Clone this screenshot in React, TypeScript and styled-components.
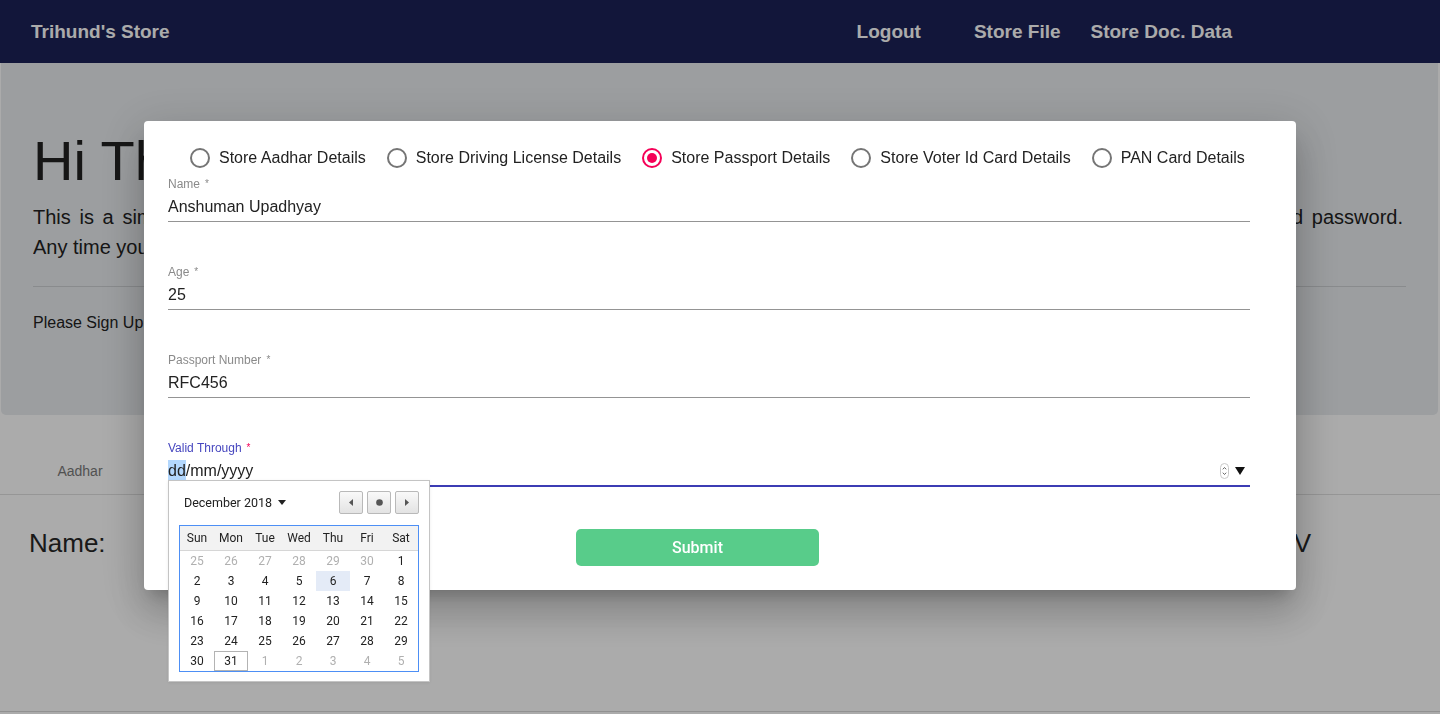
import React from 'react'
import styled, { createGlobalStyle } from 'styled-components'

const GlobalStyle = createGlobalStyle`
  html, body {
    margin: 0;
    padding: 0;
  }
  body {
    width: 1440px;
    height: 714px;
    overflow: hidden;
    background: #fff;
    font-family: "Liberation Sans", Arial, sans-serif;
    color: #222;
  }
  * { box-sizing: border-box; }
`

/* ---------- page behind the dialog ---------- */

const NavBar = styled.nav`
  height: 63px;
  background: #1b2257;
  display: flex;
  align-items: center;
  padding: 0 193px 0 31px;
`

const Brand = styled.div`
  color: #fff;
  font-size: 19px;
  font-weight: 700;
`

const NavLinks = styled.div`
  margin-left: auto;
  display: flex;
  align-items: center;
`

const NavLink = styled.a<{ $extra?: number }>`
  color: #fff;
  font-size: 19px;
  font-weight: 700;
  padding: 0 15px;
  margin-right: ${p => p.$extra ?? 0}px;
  text-decoration: none;
`

const Jumbotron = styled.section`
  background: #e9ecef;
  padding: 64px 32px;
  border-radius: 0 0 5px 5px;
  margin: 0 2px 0 1px;
`

const Display = styled.h1`
  margin: 0 0 8px;
  font-size: 56px;
  line-height: 67px;
  font-weight: 300;
`

const Lead = styled.p`
  margin: 0;
  font-size: 20px;
  line-height: 30px;
  font-weight: 300;
`

const LeadLine = styled.span<{ $full?: boolean }>`
  display: block;
  white-space: ${p => (p.$full ? 'nowrap' : 'normal')};
  overflow: hidden;
  text-align: ${p => (p.$full ? 'justify' : 'left')};
  text-align-last: ${p => (p.$full ? 'justify' : 'left')};
  padding-right: ${p => (p.$full ? 3 : 0)}px;
`

const Rule = styled.hr`
  margin: 24px 0;
  border: 0;
  border-top: 1px solid rgba(0, 0, 0, 0.12);
`

const Small = styled.p`
  margin: 0 0 16px;
  font-size: 16px;
  line-height: 24px;
`

const Tabs = styled.div`
  margin-top: 32px;
  height: 48px;
  display: flex;
  border-bottom: 1px solid #e0e0e0;
`

const Tab = styled.div`
  width: 160px;
  display: flex;
  align-items: center;
  justify-content: center;
  font-size: 14px;
  color: #7a7a7a;
`

const DetailRow = styled.div`
  margin-top: 32px;
  display: flex;
  justify-content: space-between;
  padding: 0 129px 0 29px;
  font-size: 26px;
  line-height: 32px;
  color: #262626;
`

const TableEdge = styled.div`
  margin-top: 152px;
  border-top: 1px solid #d8d8d8;
  height: 4px;
`

/* ---------- dialog ---------- */

const Backdrop = styled.div`
  position: fixed;
  inset: 0;
  background: rgba(0, 0, 0, 0.33);
  display: flex;
  justify-content: center;
  align-items: flex-start;
  padding-top: 121px;
`

const Dialog = styled.div`
  width: 1152px;
  background: #fff;
  border-radius: 4px;
  padding: 25px 24px 24px;
  box-shadow: 0 11px 15px -7px rgba(0, 0, 0, 0.2), 0 24px 38px 3px rgba(0, 0, 0, 0.14),
    0 9px 46px 8px rgba(0, 0, 0, 0.12);
`

const RadioRow = styled.div`
  height: 24px;
  display: flex;
  align-items: center;
  gap: 21px;
  padding-left: 22px;
`

const RadioOption = styled.label`
  display: flex;
  align-items: center;
  gap: 9px;
  font-size: 16px;
  color: #222;
`

const RadioCircle = styled.span<{ $checked?: boolean }>`
  width: 20px;
  height: 20px;
  border-radius: 50%;
  border: 2px solid ${p => (p.$checked ? '#f50057' : '#757575')};
  display: flex;
  align-items: center;
  justify-content: center;
  &::after {
    content: '';
    width: 10px;
    height: 10px;
    border-radius: 50%;
    background: ${p => (p.$checked ? '#f50057' : 'transparent')};
  }
`

const Fields = styled.div`
  margin-top: 6px;
  width: 1082px;
  display: flex;
  flex-direction: column;
  gap: 42px;
`

const Field = styled.div`
  position: relative;
`

const Label = styled.div<{ $focused?: boolean }>`
  font-size: 12px;
  line-height: 16px;
  color: ${p => (p.$focused ? '#4646bf' : '#8a8a8a')};
`

const Star = styled.span<{ $focused?: boolean }>`
  margin-left: 5px;
  font-size: 10px;
  vertical-align: top;
  color: ${p => (p.$focused ? '#f50057' : '#8a8a8a')};
`

const InputBox = styled.div<{ $focused?: boolean }>`
  display: flex;
  align-items: center;
  padding: 4px 0 3px;
  font-size: 16px;
  line-height: 22px;
  color: #222;
  border-bottom: ${p => (p.$focused ? '2px solid #3c3cb4' : '1px solid #949494')};
`

const Selected = styled.span`
  background: #b3d7fd;
`

const InputIcons = styled.span`
  margin-left: auto;
  display: flex;
  align-items: center;
  gap: 6px;
  padding-right: 5px;
`

const SubmitButton = styled.button`
  margin: 42px 0 0 408px;
  width: 243px;
  height: 37px;
  border: 0;
  border-radius: 5px;
  background: #58cc8a;
  color: #fff;
  font-family: Roboto, "Liberation Sans", sans-serif;
  font-size: 16px;
  font-weight: 500;
`

/* ---------- native date picker popup ---------- */

const Picker = styled.div`
  position: absolute;
  top: 40px;
  left: 0;
  width: 262px;
  padding: 10px 10px 9px;
  background: #fff;
  border: 1px solid #c4c4c4;
  box-shadow: 0 1px 3px rgba(0, 0, 0, 0.08);
  font-family: Roboto, "Liberation Sans", sans-serif;
`

const PickerHead = styled.div`
  height: 23px;
  display: flex;
  align-items: center;
  margin-bottom: 11px;
`

const MonthLabel = styled.div`
  display: flex;
  align-items: center;
  gap: 6px;
  padding-left: 5px;
  font-size: 12.5px;
  color: #222;
`

const NavButtons = styled.div`
  margin-left: auto;
  display: flex;
  gap: 4px;
`

const NavButton = styled.div`
  width: 24px;
  height: 23px;
  border: 1px solid #b9b9b9;
  border-radius: 2px;
  background: linear-gradient(#f9f9f9, #e3e3e3);
  display: flex;
  align-items: center;
  justify-content: center;
`

const Grid = styled.div`
  border: 1px solid #4d8ff5;
  display: grid;
  grid-template-columns: repeat(7, 34px);
`

const WeekDay = styled.div`
  height: 25px;
  background: #f2f2f2;
  border-bottom: 1px solid #d6d6d6;
  display: flex;
  align-items: center;
  justify-content: center;
  font-size: 12px;
  color: #222;
`

const Day = styled.div<{ $muted?: boolean; $today?: boolean; $hover?: boolean }>`
  height: 20px;
  display: flex;
  align-items: center;
  justify-content: center;
  font-size: 12px;
  color: ${p => (p.$muted ? '#b0b0b0' : '#222')};
  background: ${p => (p.$hover ? '#e4ebf7' : 'transparent')};
  border: 1px solid ${p => (p.$today ? '#b3b3b3' : 'transparent')};
`

const weekDays = ['Sun', 'Mon', 'Tue', 'Wed', 'Thu', 'Fri', 'Sat']

const weeks: number[][] = [
  [25, 26, 27, 28, 29, 30, 1],
  [2, 3, 4, 5, 6, 7, 8],
  [9, 10, 11, 12, 13, 14, 15],
  [16, 17, 18, 19, 20, 21, 22],
  [23, 24, 25, 26, 27, 28, 29],
  [30, 31, 1, 2, 3, 4, 5]
]

const options = [
  'Store Aadhar Details',
  'Store Driving License Details',
  'Store Passport Details',
  'Store Voter Id Card Details',
  'PAN Card Details'
]

const textFields = [
  { label: 'Name', value: 'Anshuman Upadhyay' },
  { label: 'Age', value: '25' },
  { label: 'Passport Number', value: 'RFC456' }
]

const DatePicker = () => (
  <Picker>
    <PickerHead>
      <MonthLabel>
        December 2018
        <svg width='8' height='5' viewBox='0 0 8 5'>
          <path d='M0 0h8L4 5z' fill='#222' />
        </svg>
      </MonthLabel>
      <NavButtons>
        <NavButton>
          <svg width='4' height='7' viewBox='0 0 4 7'>
            <path d='M4 0v7L0 3.5z' fill='#555' />
          </svg>
        </NavButton>
        <NavButton>
          <svg width='7' height='7' viewBox='0 0 7 7'>
            <circle cx='3.5' cy='3.5' r='3.3' fill='#555' />
          </svg>
        </NavButton>
        <NavButton>
          <svg width='4' height='7' viewBox='0 0 4 7'>
            <path d='M0 0v7l4-3.5z' fill='#555' />
          </svg>
        </NavButton>
      </NavButtons>
    </PickerHead>
    <Grid>
      {weekDays.map(d => (
        <WeekDay key={d}>{d}</WeekDay>
      ))}
      {weeks.map((week, w) =>
        week.map((day, i) => {
          const muted = (w === 0 && day > 7) || (w === 5 && day < 7)
          return (
            <Day
              key={w + '-' + i}
              $muted={muted}
              $hover={w === 1 && day === 6}
              $today={w === 5 && day === 31}
            >
              {day}
            </Day>
          )
        })
      )}
    </Grid>
  </Picker>
)

const App = () => {
  return (
    <>
      <GlobalStyle />
      <NavBar>
        <Brand>Trihund's Store</Brand>
        <NavLinks>
          <NavLink $extra={23}>Logout</NavLink>
          <NavLink>Store File</NavLink>
          <NavLink>Store Doc. Data</NavLink>
        </NavLinks>
      </NavBar>

      <Jumbotron>
        <Display>Hi There!</Display>
        <Lead>
          <LeadLine $full>
            This is a simple document store where you can keep the details of your identity documents safely, secured with your own username and password.
          </LeadLine>
          <LeadLine>Any time you can come back and check your stored documents.</LeadLine>
        </Lead>
        <Rule />
        <Small>Please Sign Up or Log In to continue.</Small>
      </Jumbotron>

      <Tabs>
        <Tab>Aadhar</Tab>
      </Tabs>
      <DetailRow>
        <span>Name:</span>
        <span>DOV</span>
      </DetailRow>
      <TableEdge />

      <Backdrop>
        <Dialog>
          <RadioRow>
            {options.map((o, i) => (
              <RadioOption key={o}>
                <RadioCircle $checked={i === 2} />
                {o}
              </RadioOption>
            ))}
          </RadioRow>
          <Fields>
            {textFields.map(f => (
              <Field key={f.label}>
                <Label>
                  {f.label}
                  <Star>*</Star>
                </Label>
                <InputBox>{f.value}</InputBox>
              </Field>
            ))}
            <Field>
              <Label $focused>
                Valid Through
                <Star $focused>*</Star>
              </Label>
              <InputBox $focused>
                <Selected>dd</Selected>/mm/yyyy
                <InputIcons>
                  <svg width='9' height='16' viewBox='0 0 9 16'>
                    <rect x='0.5' y='0.5' width='8' height='15' rx='4' fill='#fff' stroke='#c8c8c8' />
                    <path d='M2.8 6.3 4.5 4.5 6.2 6.3M2.8 9.7 4.5 11.5 6.2 9.7' fill='none' stroke='#555' strokeWidth='0.9' />
                  </svg>
                  <svg width='10' height='8' viewBox='0 0 10 8'>
                    <path d='M0 0h10L5 8z' fill='#111' />
                  </svg>
                </InputIcons>
              </InputBox>
              <DatePicker />
            </Field>
          </Fields>
          <SubmitButton>Submit</SubmitButton>
        </Dialog>
      </Backdrop>
    </>
  )
}

export default App
